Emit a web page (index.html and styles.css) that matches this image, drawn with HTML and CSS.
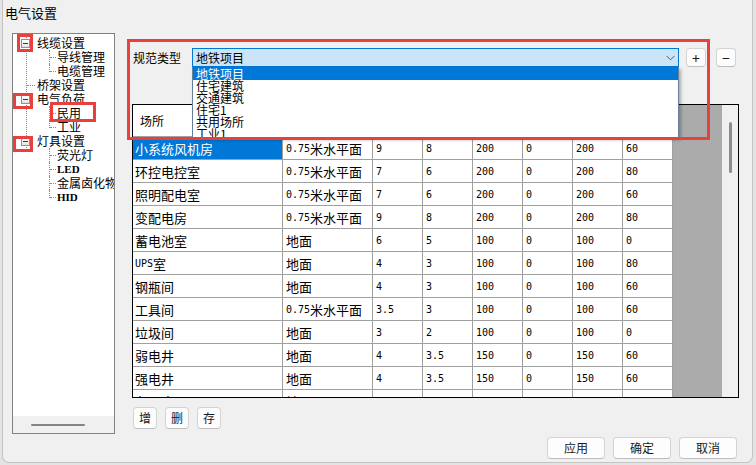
FILE: index.html
```html
<!DOCTYPE html>
<html lang="zh-CN">
<head>
<meta charset="utf-8">
<title>电气设置</title>
<link rel="stylesheet" href="styles.css">
</head>
<body>
<div class="window">
  <div class="titlebar">电气设置</div>
  <div class="content">
    <aside class="tree">
      <div class="tree-body">
        <div class="trunk">
          <div class="row">
            <span class="exp"><span class="mark mark-a"></span></span>
            <span class="label">线缆设置</span>
          </div>
          <div class="children">
            <div class="row child"><span class="conn"></span><span class="label">导线管理</span></div>
            <div class="row child"><span class="conn last"></span><span class="label">电缆管理</span></div>
          </div>
          <div class="row"><span class="hl"></span><span class="label">桥架设置</span></div>
          <div class="row">
            <span class="exp"><span class="mark mark-b"></span></span>
            <span class="label">电气负荷</span>
          </div>
          <div class="children">
            <div class="row child"><span class="conn"></span><span class="label marked">民用<span class="mark mark-c"></span></span></div>
            <div class="row child"><span class="conn last"></span><span class="label">工业</span></div>
          </div>
          <div class="row">
            <span class="exp"><span class="mark mark-d"></span></span>
            <span class="label">灯具设置</span>
          </div>
        </div>
        <div class="children outer">
          <div class="row child"><span class="conn"></span><span class="label">荧光灯</span></div>
          <div class="row child"><span class="conn"></span><span class="label latin">LED</span></div>
          <div class="row child"><span class="conn"></span><span class="label">金属卤化物</span></div>
          <div class="row child"><span class="conn last"></span><span class="label latin">HID</span></div>
        </div>
      </div>
      <div class="hscroll"><span class="hthumb"></span></div>
    </aside>

    <main class="main">
      <div class="mark mark-main"></div>
      <div class="toolbar">
        <span class="field-label">规范类型</span>
        <div class="combo">
          <span class="combo-text">地铁项目</span>
          <svg class="chev" width="9" height="6" viewBox="0 0 9 6"><polyline points="0.5,0.8 4.5,4.8 8.5,0.8" fill="none" stroke="#5c5c5c" stroke-width="1"/></svg>
          <ul class="dropdown">
            <li class="active">地铁项目</li>
            <li>住宅建筑</li>
            <li>交通建筑</li>
            <li>住宅1</li>
            <li>共用场所</li>
            <li>工业1</li>
          </ul>
        </div>
        <button class="sq">+</button>
        <button class="sq sq-minus">−</button>
      </div>

      <div class="grid">
        <div class="grid-view">
          <div class="cells">
            <div class="cell hd">场所</div>
            <div class="cell hd">参考平面</div>
            <div class="cell hd">照度</div>
            <div class="cell hd">功率</div>
            <div class="cell hd">标准</div>
            <div class="cell hd">UGR</div>
            <div class="cell hd">Uo</div>
            <div class="cell hd">Ra</div>

            <div class="cell first sel">小系统风机房</div>
            <div class="cell"><span class="n">0.75</span>米水平面</div>
            <div class="cell n">9</div><div class="cell n">8</div><div class="cell n">200</div><div class="cell n">0</div><div class="cell n">200</div><div class="cell n">60</div>

            <div class="cell first">环控电控室</div>
            <div class="cell"><span class="n">0.75</span>米水平面</div>
            <div class="cell n">7</div><div class="cell n">6</div><div class="cell n">200</div><div class="cell n">0</div><div class="cell n">200</div><div class="cell n">80</div>

            <div class="cell first">照明配电室</div>
            <div class="cell"><span class="n">0.75</span>米水平面</div>
            <div class="cell n">7</div><div class="cell n">6</div><div class="cell n">200</div><div class="cell n">0</div><div class="cell n">200</div><div class="cell n">60</div>

            <div class="cell first">变配电房</div>
            <div class="cell"><span class="n">0.75</span>米水平面</div>
            <div class="cell n">9</div><div class="cell n">8</div><div class="cell n">200</div><div class="cell n">0</div><div class="cell n">200</div><div class="cell n">80</div>

            <div class="cell first">蓄电池室</div>
            <div class="cell">地面</div>
            <div class="cell n">6</div><div class="cell n">5</div><div class="cell n">100</div><div class="cell n">0</div><div class="cell n">100</div><div class="cell n">0</div>

            <div class="cell first"><span class="n">UPS</span>室</div>
            <div class="cell">地面</div>
            <div class="cell n">4</div><div class="cell n">3</div><div class="cell n">100</div><div class="cell n">0</div><div class="cell n">100</div><div class="cell n">80</div>

            <div class="cell first">钢瓶间</div>
            <div class="cell">地面</div>
            <div class="cell n">4</div><div class="cell n">3</div><div class="cell n">100</div><div class="cell n">0</div><div class="cell n">100</div><div class="cell n">60</div>

            <div class="cell first">工具间</div>
            <div class="cell"><span class="n">0.75</span>米水平面</div>
            <div class="cell n">3.5</div><div class="cell n">3</div><div class="cell n">100</div><div class="cell n">0</div><div class="cell n">100</div><div class="cell n">60</div>

            <div class="cell first">垃圾间</div>
            <div class="cell">地面</div>
            <div class="cell n">3</div><div class="cell n">2</div><div class="cell n">100</div><div class="cell n">0</div><div class="cell n">100</div><div class="cell n">0</div>

            <div class="cell first">弱电井</div>
            <div class="cell">地面</div>
            <div class="cell n">4</div><div class="cell n">3.5</div><div class="cell n">150</div><div class="cell n">0</div><div class="cell n">150</div><div class="cell n">60</div>

            <div class="cell first">强电井</div>
            <div class="cell">地面</div>
            <div class="cell n">4</div><div class="cell n">3.5</div><div class="cell n">150</div><div class="cell n">0</div><div class="cell n">150</div><div class="cell n">60</div>

            <div class="cell first">备品库</div>
            <div class="cell">地面</div>
            <div class="cell n">4</div><div class="cell n">3.5</div><div class="cell n">100</div><div class="cell n">0</div><div class="cell n">100</div><div class="cell n">60</div>
          </div>
        </div>
        <div class="vscroll"><span class="vthumb"></span></div>
      </div>

      <div class="edit-buttons">
        <button class="btn-sm">增</button>
        <button class="btn-sm">删</button>
        <button class="btn-sm">存</button>
      </div>

      <div class="dialog-buttons">
        <button class="btn">应用</button>
        <button class="btn">确定</button>
        <button class="btn">取消</button>
      </div>
    </main>
  </div>
</div>
</body>
</html>
```

FILE: styles.css
```css
* { box-sizing: border-box; }
html, body { margin: 0; padding: 0; }
body {
  width: 756px;
  height: 465px;
  overflow: hidden;
  background: #e4e4e4;
  font-family: "Noto Sans CJK SC", "Noto Sans", sans-serif;
  font-size: 12px;
  color: #000;
}

.window {
  width: 751px;
  height: 463px;
  margin-left: 2px;
  background: #f0f0f0;
  border: 1px solid #c4c4c4;
  border-top: 0;
  border-radius: 0 0 7px 7px;
  display: flex;
  flex-direction: column;
}

.titlebar {
  flex: none;
  height: 25px;
  line-height: 25px;
  padding-left: 2px;
  font-size: 13px;
}

.content {
  display: flex;
  align-items: flex-start;
  padding: 8px 0 0 9px;
}

/* ---------- tree ---------- */
.tree {
  flex: none;
  width: 103px;
  height: 401px;
  border: 1px solid #828282;
  background: #fff;
  display: flex;
  flex-direction: column;
}
.tree-body {
  flex: 1;
  overflow: hidden;
  padding-top: 2px;
}
.trunk {
  margin-left: 13px;
  border-left: 1px dotted #8a8a8a;
}
.row {
  display: flex;
  align-items: center;
  height: 14px;
  white-space: nowrap;
}
.label {
  line-height: 14px;
  font-size: 12px;
}
.exp {
  position: relative;
  flex: none;
  width: 9px;
  height: 9px;
  margin: 0 7px 0 -6px;
  border: 1px solid #919191;
  background: linear-gradient(#ffffff, #e4e4e4);
  display: flex;
  align-items: center;
  justify-content: center;
}
.exp::before {
  content: "";
  width: 5px;
  height: 1px;
  background: #3a3a3a;
}
.hl {
  flex: none;
  width: 8px;
  margin-right: 2px;
  border-top: 1px dotted #8a8a8a;
}
.children { margin-left: 22px; }
.children.outer { margin-left: 36px; }
.conn {
  flex: none;
  width: 7px;
  height: 14px;
  border-left: 1px dotted #8a8a8a;
  display: flex;
  align-items: center;
}
.conn::after {
  content: "";
  width: 6px;
  border-top: 1px dotted #8a8a8a;
}
.conn.last {
  height: 8px;
  align-self: flex-start;
  align-items: flex-end;
}
.child .label { margin-left: 1px; }
.latin {
  font-family: "Liberation Serif", serif;
  font-weight: bold;
  font-size: 11px;
}
.marked { position: relative; }

.mark {
  position: absolute;
  border: 3px solid #e8403c;
  pointer-events: none;
}
.mark-a { left: -5px; top: -6px; width: 16px; height: 18px; }
.mark-b { left: -9px; top: -3px; width: 20px; height: 16px; }
.mark-d { left: -9px; top: -2px; width: 20px; height: 16px; }
.mark-c { left: -7px; top: -4px; width: 46px; height: 20px; }

.hscroll {
  flex: none;
  height: 17px;
  background: #f0f0f0;
  display: flex;
  align-items: center;
}
.hthumb {
  width: 54px;
  height: 2px;
  margin-left: 18px;
  border-radius: 1px;
  background: #858585;
}

/* ---------- main ---------- */
.main {
  position: relative;
  flex: none;
  width: 607px;
  margin-left: 17px;
  padding-top: 15px;
}
.mark-main {
  left: -5px;
  top: 6px;
  width: 583px;
  height: 101px;
  z-index: 3;
}

.toolbar {
  display: flex;
  align-items: center;
  height: 19px;
}
.field-label {
  width: 60px;
  padding-left: 1px;
  font-size: 12px;
}
.combo {
  position: relative;
  width: 487px;
  height: 19px;
  border: 1px solid #0078d7;
  background: #cce4f7;
  display: flex;
  align-items: center;
  padding-left: 3px;
}
.combo-text { flex: 1; font-size: 12px; }
.chev { margin-right: 3px; }
.dropdown {
  position: absolute;
  left: -1px;
  top: 18px;
  width: 487px;
  height: 71px;
  margin: 0;
  padding: 0;
  list-style: none;
  background: #fff;
  border: 1px solid #66809e;
  border-top: 0;
  box-shadow: 2px 2px 3px rgba(0, 0, 0, 0.28);
  overflow: hidden;
  z-index: 2;
}
.dropdown li {
  height: 12px;
  line-height: 12px;
  padding-left: 3px;
  font-size: 12px;
  white-space: nowrap;
}
.dropdown li.active {
  height: 13px;
  line-height: 13px;
  background: #0078d7;
  color: #fff;
}

button {
  font-family: "Noto Sans CJK SC", "Noto Sans", sans-serif;
  font-size: 12px;
  color: #1a1a1a;
  background: #fdfdfd;
  border: 1px solid #d3d3d3;
  border-bottom-color: #bdbdbd;
  border-radius: 4px;
  padding: 0;
  line-height: 1;
}
.sq {
  width: 20px;
  height: 19px;
  margin-left: 7px;
  font-size: 14px;
}
.sq-minus { margin-left: 10px; }

/* ---------- grid ---------- */
.grid {
  margin-top: 37px;
  height: 294px;
  border: 1px solid #000;
  display: flex;
}
.grid-view {
  width: 589px;
  background: #ababab;
  overflow: hidden;
}
.cells {
  display: grid;
  grid-template-columns: 150px 90px repeat(6, 50px);
  width: 540px;
  background: #fff;
}
.cell {
  height: 23px;
  border-right: 1px solid #a0a0a0;
  border-bottom: 1px solid #a0a0a0;
  padding-left: 3px;
  display: flex;
  align-items: center;
  font-size: 13px;
  white-space: nowrap;
  overflow: hidden;
}
.cell.first { padding-left: 2px; }
.cell.hd {
  height: 32px;
  padding-left: 7px;
  font-size: 12px;
}
.cell.sel {
  background: #0078d7;
  color: #fff;
}
.n {
  font-family: "DejaVu Sans Mono", "Liberation Mono", monospace;
  font-size: 10px;
}
.vscroll {
  width: 16px;
  background: #f0f0f0;
}
.vthumb {
  display: block;
  width: 3px;
  height: 51px;
  margin: 17px 0 0 7px;
  border-radius: 2px;
  background: #8c8c8c;
}

.edit-buttons {
  display: flex;
  gap: 8px;
  margin: 9px 0 0 1px;
}
.btn-sm {
  width: 24px;
  height: 22px;
}
.dialog-buttons {
  display: flex;
  justify-content: flex-end;
  gap: 8px;
  margin: 8px 2px 0 0;
}
.btn {
  width: 58px;
  height: 22px;
}
```
